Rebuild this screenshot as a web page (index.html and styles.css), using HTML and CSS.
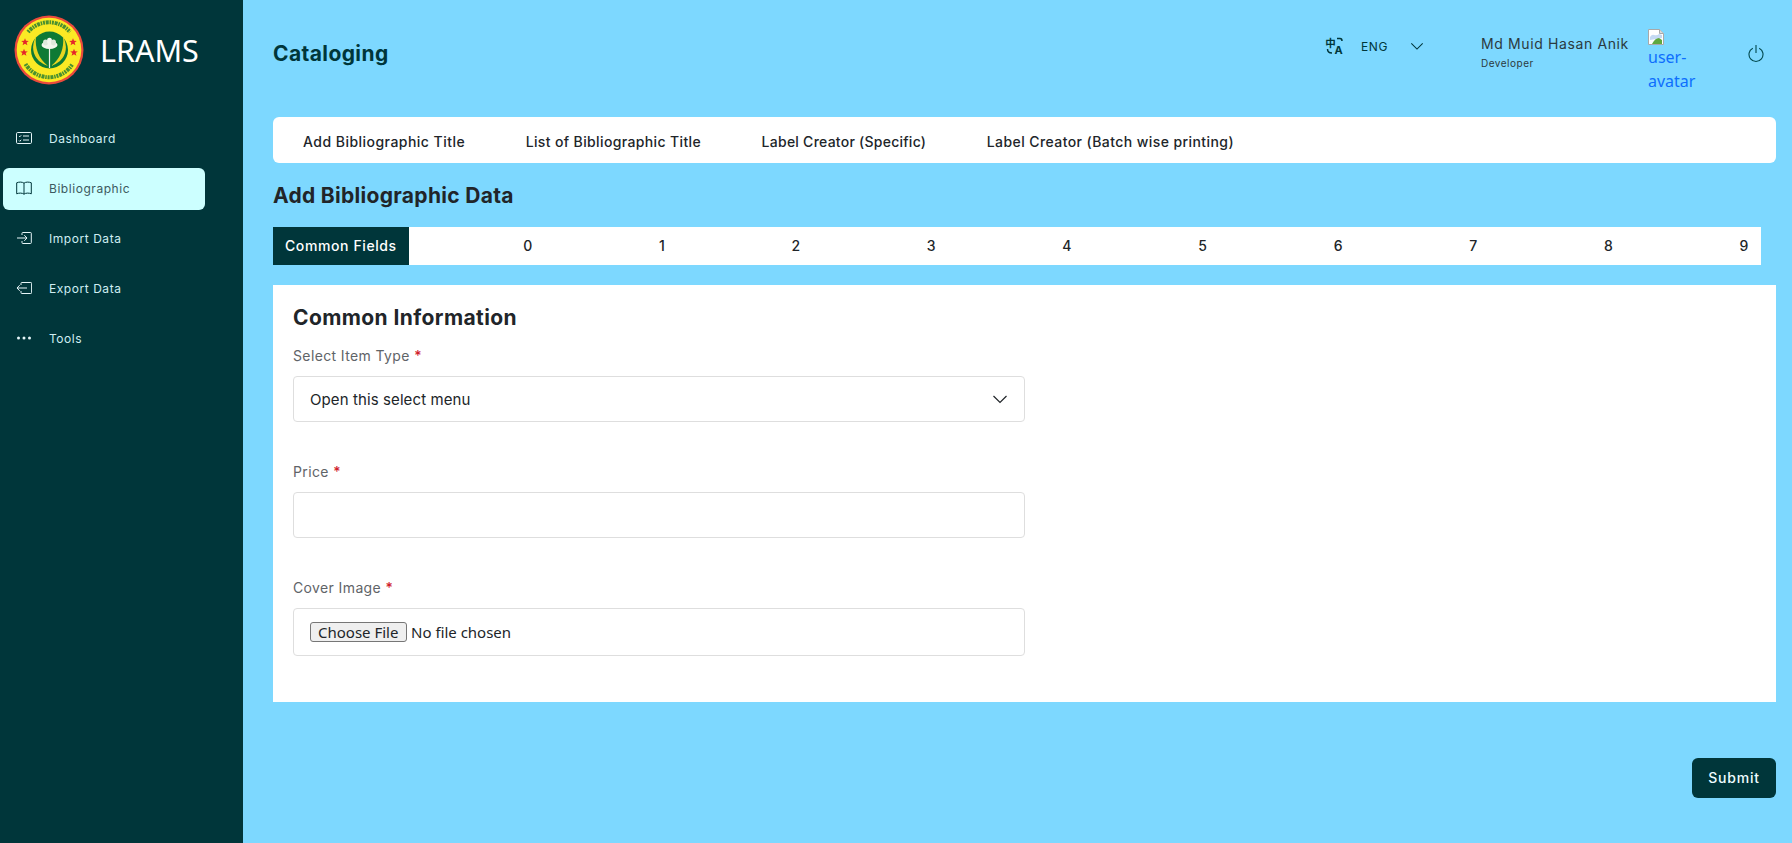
FILE: index.html
```html
<!DOCTYPE html>
<html lang="en">
<head>
<meta charset="utf-8">
<title>LRAMS - Cataloging</title>
<link rel="stylesheet" href="styles.css">
</head>
<body>
<div class="app">
  <aside class="sidebar">
    <div class="brand">
      <svg class="logo" viewBox="0 0 70 70" aria-hidden="true">
        <defs>
          <path id="star" d="M0-3.800l1 2.600 2.800.1-2.200 1.700.8 2.700L0 1.700l-2.400 1.600.8-2.700-2.200-1.700 2.800-.1z" fill="#e5252a"/>
        </defs>
        <circle cx="35" cy="35" r="34.500" fill="#ea4a3c"/>
        <circle cx="35" cy="35" r="32.300" fill="#fbe924"/>
        <path d="M14 17A27.500 27.500 0 0 1 56 17" fill="none" stroke="#4a9030" stroke-width="4" stroke-dasharray="2 .8 3 .8 1.500 .8"/>
        <path d="M11.500 49A27.500 27.500 0 0 0 58.500 49" fill="none" stroke="#4a9030" stroke-width="4" stroke-dasharray="2 .8 3 .8 1.500 .8"/>
        <circle cx="35.500" cy="35" r="18.500" fill="#0e7a35"/>
        <path d="M22 21Q15 36 25 46Q30 50 34 51Q20 40 22 21Z" fill="#e8d520"/>
        <path d="M49 21Q56 36 46 46Q41 50 37 51Q51 40 49 21Z" fill="#e8d520"/>
        <path d="M35.500 33V53" stroke="#eef3ea" stroke-width="1.200"/>
        <ellipse cx="35.500" cy="30" rx="8" ry="4" fill="#f3f6ee"/>
        <ellipse cx="31.500" cy="27.500" rx="2.500" ry="3" fill="#dfe8dc"/>
        <ellipse cx="35.500" cy="26" rx="2.500" ry="3.200" fill="#f3f6ee"/>
        <ellipse cx="39.500" cy="27.500" rx="2.500" ry="3" fill="#dfe8dc"/>
        <use href="#star" x="11" y="27"/>
        <use href="#star" x="59" y="27"/>
        <use href="#star" x="10" y="37.500"/>
        <use href="#star" x="60" y="37.500"/>
      </svg>
      <span class="brand-name">LRAMS</span>
    </div>
    <nav class="nav">
      <a class="nav-item">
        <svg class="nav-icon" viewBox="0 0 16 16"><rect x=".5" y="2.500" width="15" height="11" rx="1.200"/><path d="M7 6h6M7 10h6M3 6l.8.8L5.200 5.300M3 10.500l.8.800 1.400-1.500"/></svg>
        <span>Dashboard</span>
      </a>
      <a class="nav-item active">
        <svg class="nav-icon" viewBox="0 0 16 16"><path d="M8 3.200C6.500 1.800 3 1.800.7 2.800v11c2.300-1 5.800-1 7.300.4 1.500-1.400 5-1.400 7.300-.4v-11C13 1.800 9.500 1.800 8 3.200ZM8 3.200v11"/></svg>
        <span>Bibliographic</span>
      </a>
      <a class="nav-item">
        <svg class="nav-icon" viewBox="0 0 16 16"><path d="M6 5V3.300q0-.8.800-.800h7.700q.8 0 .8.800v9.400q0 .8-.8.800H6.800q-.8 0-.8-.8V11M1 8h10M8.300 5.200 11 8l-2.700 2.800"/></svg>
        <span>Import Data</span>
      </a>
      <a class="nav-item">
        <svg class="nav-icon" viewBox="0 0 16 16"><path d="M5 5V3.300q0-.8.800-.800h9q.8 0 .8.800v9.400q0 .8-.8.800h-9q-.8 0-.8-.8V11M1 8h10M3.700 5.200 1 8l2.700 2.800"/></svg>
        <span>Export Data</span>
      </a>
      <a class="nav-item">
        <svg class="nav-icon dots" viewBox="0 0 16 16"><circle cx="2.500" cy="8" r="1.500"/><circle cx="8" cy="8" r="1.500"/><circle cx="13.500" cy="8" r="1.500"/></svg>
        <span>Tools</span>
      </a>
    </nav>
  </aside>

  <main class="main">
    <header class="topbar">
      <h1 class="page-title">Cataloging</h1>
      <div class="top-right">
        <div class="lang">
          <svg class="lang-icon" viewBox="0 0 18 18"><text x="-.7" y="9.500" class="zh">中</text><text x="8.500" y="16.500" class="en">A</text><path d="M11 1.500h3q2 0 2 2.500M1.500 12q0 4 4.500 4" fill="none" stroke="#00363a" stroke-width="1.500"/></svg>
          <span class="lang-label">ENG</span>
          <svg class="chev" viewBox="0 0 16 16"><path d="M1.500 5 8 11.500 14.500 5"/></svg>
        </div>
        <div class="user">
          <div class="user-name">Md Muid Hasan Anik</div>
          <div class="user-role">Developer</div>
        </div>
        <a class="avatar">
          <svg class="broken" viewBox="0 0 16 16"><path d="M.5.500h11l4 4v11H.5Z" fill="#fff" stroke="#a9a9a9"/><path d="M11.500.500v4h4" fill="#dcdcdc" stroke="#a9a9a9"/><path d="M2 8q2-3 4-2 3 1 5-1l3 1v3L2 11Z" fill="#c4d9f3"/><path d="M4 15q3-6 7-6l3 2v4Z" fill="#5fa83f"/></svg>
          <span>user-avatar</span>
        </a>
        <svg class="power" viewBox="0 0 16 18"><path d="M8 1v8M4.800 4.200a7 7 0 1 0 6.400 0"/></svg>
      </div>
    </header>

    <div class="tabs">
      <a class="tab tab-add">Add Bibliographic Title</a>
      <a class="tab tab-list">List of Bibliographic Title</a>
      <a class="tab tab-label">Label Creator (Specific)</a>
      <a class="tab">Label Creator (Batch wise printing)</a>
    </div>

    <h2 class="section-title">Add Bibliographic Data</h2>

    <div class="steps">
      <a class="step current">Common Fields</a>
      <a class="step">0</a>
      <a class="step">1</a>
      <a class="step">2</a>
      <a class="step">3</a>
      <a class="step">4</a>
      <a class="step">5</a>
      <a class="step">6</a>
      <a class="step">7</a>
      <a class="step">8</a>
      <a class="step">9</a>
    </div>

    <section class="card">
      <h3 class="card-title">Common Information</h3>
      <div class="field">
        <label class="label">Select Item Type <b>*</b></label>
        <div class="control select">
          <span>Open this select menu</span>
          <svg class="chev" viewBox="0 0 16 16"><path d="M1.500 5 8 11.500 14.500 5"/></svg>
        </div>
      </div>
      <div class="field">
        <label class="label">Price <b>*</b></label>
        <div class="control"></div>
      </div>
      <div class="field">
        <label class="label">Cover Image <b>*</b></label>
        <div class="control file">
          <span class="file-btn">Choose File</span>
          <span class="file-name">No file chosen</span>
        </div>
      </div>
    </section>

    <div class="actions">
      <button class="submit" type="button">Submit</button>
    </div>
  </main>
</div>
</body>
</html>
```
FILE: styles.css
```css
* { box-sizing: border-box; }
html, body { margin: 0; height: 100%; }
body {
  font-family: Inter, "Liberation Sans", sans-serif;
  background: #7dd8ff;
  color: #212529;
  overflow: hidden;
}
.app { display: flex; height: 843px; }

.sidebar { width: 243px; flex: none; background: #00363a; color: #cfeef2; padding-top: 15px; }
.brand { display: flex; align-items: center; padding-left: 14px; gap: 16px; height: 70px; }
.logo { width: 70px; height: 70px; flex: none; }
.brand-name { font-family: "Noto Sans", sans-serif; font-size: 30.500px; color: #fff; line-height: 1; }
.nav { display: flex; flex-direction: column; gap: 8px; margin-top: 33px; padding-left: 3px; }
.nav-item {
  display: flex; align-items: center; gap: 17px;
  width: 202px; height: 42px; padding: 0 0 2px 13px;
  font-size: 12px; letter-spacing: .55px; color: #cfeef2; border-radius: 6px;
}
.nav-item.active { background: #ccffff; color: #3c5a60; }
.nav-icon { width: 16px; height: 16px; flex: none; fill: none; stroke: #e6f6f8; stroke-width: 1; }
.active .nav-icon { stroke: #00363a; }
.nav-icon.dots { fill: #e6f6f8; stroke: none; }

.main { flex: 1; min-width: 0; padding: 0 16px 0 30px; display: flex; flex-direction: column; }
.topbar { height: 117px; display: flex; justify-content: space-between; align-items: flex-start; }
.page-title { margin: 42px 0 0; font-size: 21px; line-height: 24px; font-weight: 700; letter-spacing: .4px; color: #00363a; }
.top-right { display: flex; align-items: flex-start; }
.lang { display: flex; align-items: center; margin-top: 37px; height: 18px; }
.lang-icon { width: 18px; height: 18px; overflow: visible; }
.zh { font-family: "Noto Sans CJK SC", sans-serif; font-size: 10.500px; font-weight: 700; fill: #00363a; }
.en { font-family: Inter, sans-serif; font-size: 11px; font-weight: 700; fill: #00363a; }
.lang-label { margin-left: 17px; width: 49px; font-size: 12px; letter-spacing: .6px; color: #00363a; }
.chev { width: 14px; height: 14px; fill: none; stroke: #00363a; stroke-width: 1.200; flex: none; }
.user { margin-left: 57px; margin-top: 35px; width: 167px; }
.user-name { font-size: 14px; line-height: 18px; letter-spacing: .62px; color: #2b3a40; white-space: nowrap; }
.user-role { font-size: 10px; line-height: 12px; margin-top: 4px; letter-spacing: .5px; color: #2b3a40; }
.avatar { display: block; width: 60px; margin-top: 29px; color: #0d6efd; font-family: "Noto Sans", sans-serif; font-size: 16px; line-height: 24px; }
.avatar span { display: block; width: 50px; }
.broken { width: 16px; height: 16px; display: block; }
.power { width: 16px; height: 18px; margin-top: 44px; margin-left: 40px; margin-right: 12px; fill: none; stroke: #00484d; stroke-width: 1.100; flex: none; }

.tabs {
  height: 46px; background: #fff; border-radius: 6px;
  display: flex; align-items: center; gap: 60.500px; padding: 2px 0 0 30px;
}
.tab { font-size: 14px; font-weight: 500; letter-spacing: .42px; color: #212529; white-space: nowrap; }
.tab-add { letter-spacing: .47px; }
.tab-list { letter-spacing: .37px; }
.tab-label { letter-spacing: .25px; }

.section-title { margin: 20px 0 0; height: 44px; font-size: 21px; line-height: 26px; font-weight: 700; letter-spacing: .3px; color: #212529; }

.steps {
  height: 38px; margin-right: 15px; background: #fff;
  display: flex; align-items: center; justify-content: space-between;
}
.step { padding: 0 12px; line-height: 38px; font-size: 14px; font-weight: 500; color: #212529; letter-spacing: .6px; }
.step.current { background: #00363a; color: #fff; width: 136px; white-space: nowrap; }

.card { margin-top: 20px; height: 417px; background: #fff; padding: 21px 20px 0; }
.card-title { margin: 0 0 16px; font-size: 21px; line-height: 24px; font-weight: 700; letter-spacing: .4px; color: #212529; }
.field { width: 732px; margin-bottom: 40px; }
.label { display: block; font-size: 14px; line-height: 20px; letter-spacing: .38px; color: #5f6468; margin-bottom: 10px; }
.label b { color: #d0202c; font-weight: 500; }
.control {
  height: 46px; border: 1px solid #dedede; border-radius: 4px; background: #fff;
  display: flex; align-items: center; padding: 0 16px;
  font-size: 15px; letter-spacing: .1px; color: #212529;
}
.select { justify-content: space-between; }
.select .chev { stroke: #212529; width: 16px; height: 16px; }
.file { height: 48px; }
.file-btn {
  font-family: "Noto Sans", sans-serif; font-size: 15px; letter-spacing: 0;
  height: 20px; line-height: 18px; padding: 0 7px; width: 97px;
  background: #efefef; border: 1px solid #767676; border-radius: 3px;
}
.file-name { font-family: "Noto Sans", sans-serif; font-size: 15px; letter-spacing: 0; margin-left: 4px; }

.actions { display: flex; justify-content: flex-end; margin-top: 56px; }
.submit {
  width: 84px; height: 40px; border: 0; border-radius: 6px; padding: 0 0 2px;
  background: #00363a; color: #eefcff;
  font-family: inherit; font-size: 14px; font-weight: 500; letter-spacing: .8px;
}
```
